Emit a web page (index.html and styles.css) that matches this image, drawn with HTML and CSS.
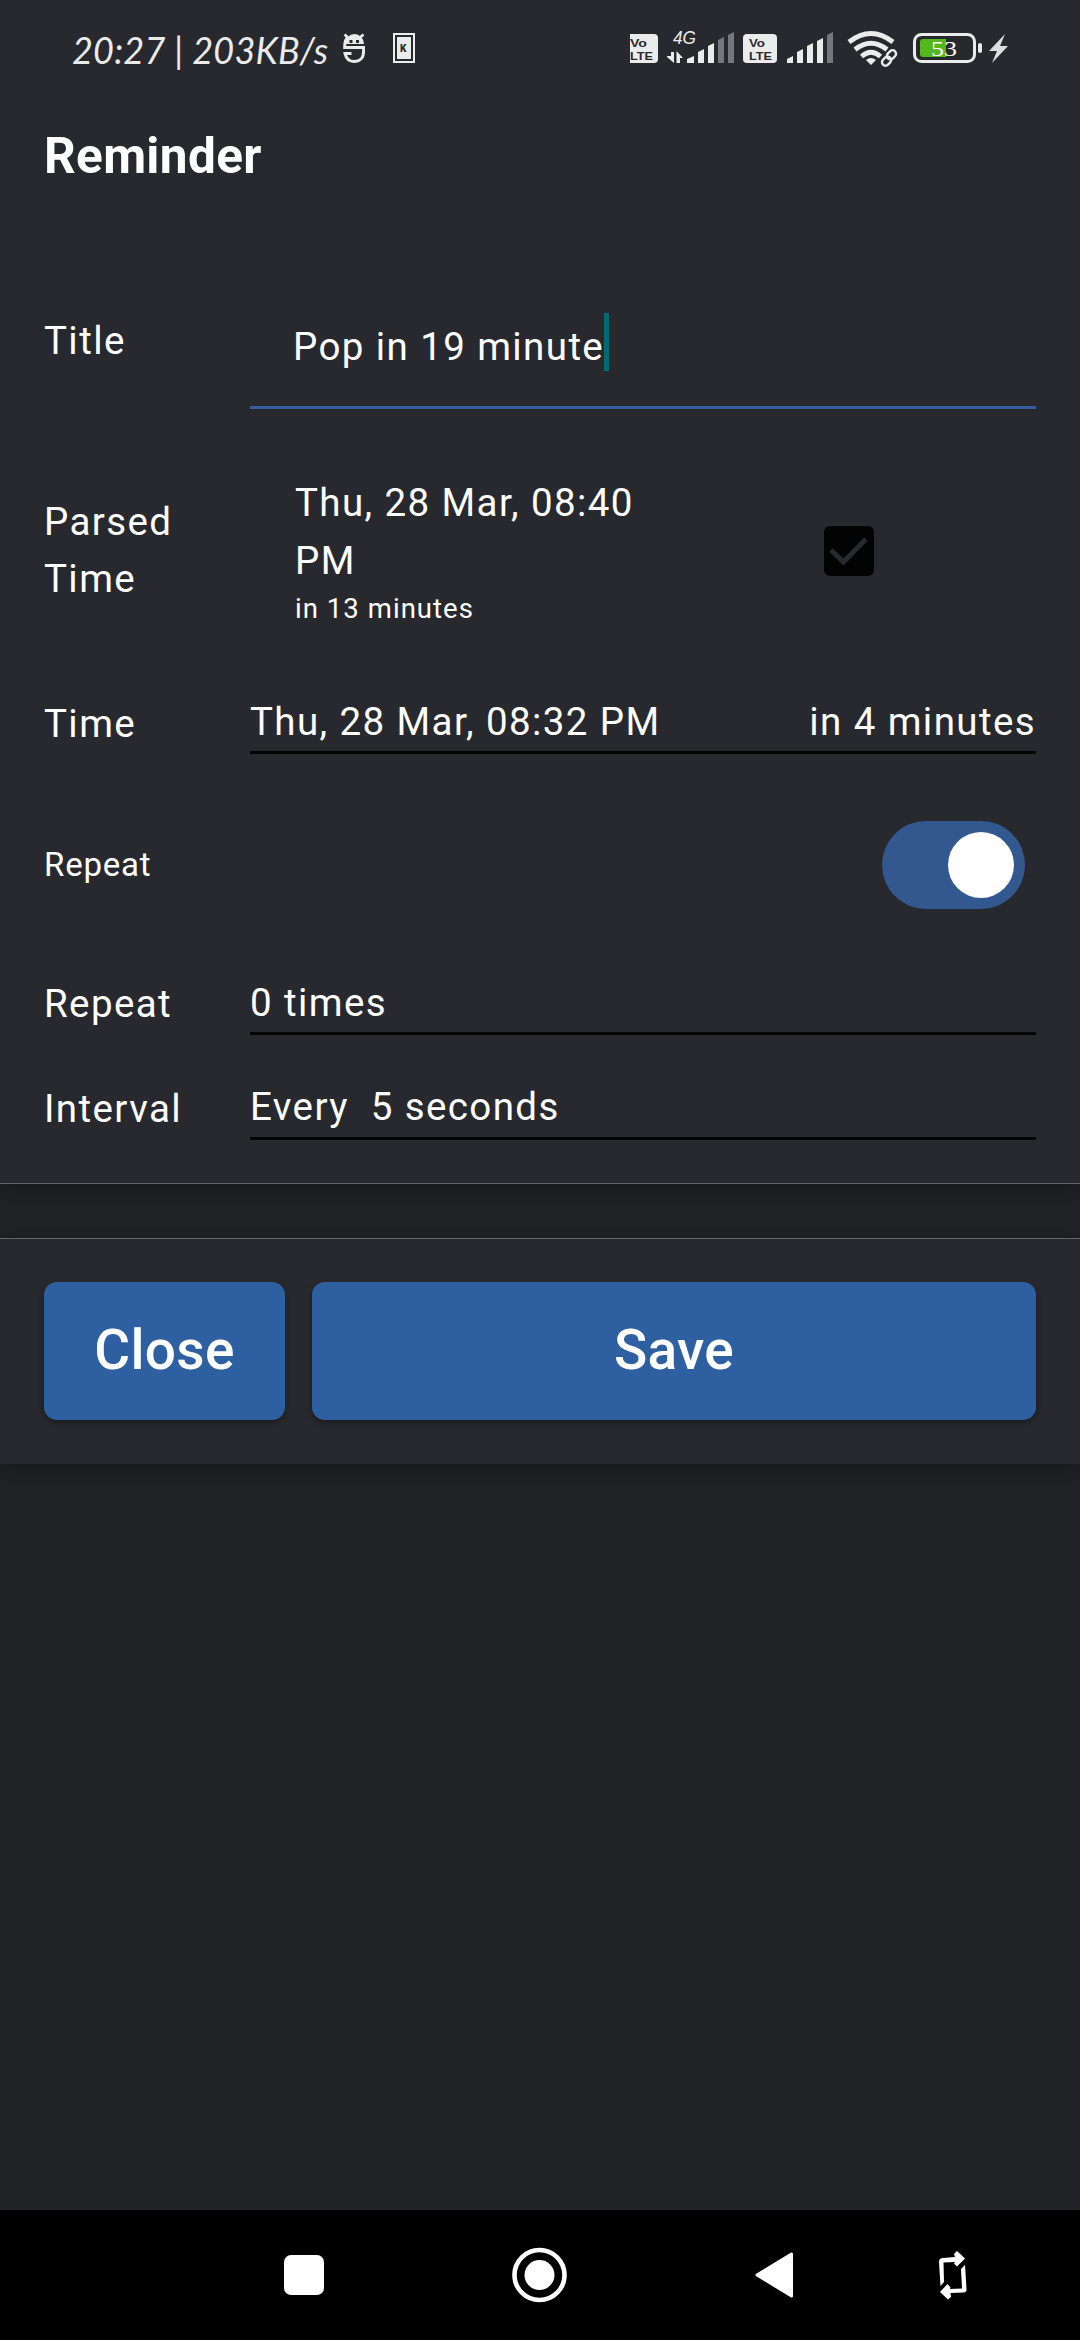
FILE: index.html
```
<!DOCTYPE html>
<html lang="en">
<head>
<meta charset="utf-8">
<title>Reminder</title>
<link rel="stylesheet" href="styles.css">
</head>
<body>
<header class="status">
  <span class="clock">20:27 | 203KB/s</span>
  <svg class="ic-shield" width="24" height="32" viewBox="0 0 24 32" fill="none" stroke="#ebebeb" stroke-width="3"><path d="M2 11A9.500 10 0 0 1 21 11Z" fill="#ebebeb" stroke="none"/><path d="M1.500 1.500 5 4.500M20.500 1.500 17 4.500" stroke-width="2.600"/><path d="M5 4Q1.500 7 1.700 14.500H20.500V19C20.500 25 16.500 28.500 11.200 28.500S3 25 2 20.500H8.500"/><path d="M6.500 8.500H9.500M13 8.500H16" stroke="#28292e"/></svg>
  <svg class="ic-card" width="22" height="30" viewBox="0 0 22 30"><path d="M1 1H21V29H1Z" fill="none" stroke="#ebebeb" stroke-width="2"/><path d="M4 4H18V26H4Z" fill="#ebebeb"/><text x="7" y="18.500" class="tiny-k">K</text></svg>
  <svg class="indicators" width="380" height="42" viewBox="0 -5 380 42" fill="#ebebeb">
    <path d="M0 2H24Q28 2 28 6V27Q28 31 24 31H0Z"/>
    <g class="volte"><text x="0" y="14.500" textLength="17" lengthAdjust="spacingAndGlyphs">Vo</text><text x="0" y="27.500" textLength="23" lengthAdjust="spacingAndGlyphs">LTE</text></g>
    <text class="net" x="43" y="12" textLength="23" lengthAdjust="spacingAndGlyphs">4G</text>
    <path d="M44 20V31L37 25V24H41V20ZM46.500 31V19L53 26H50V31Z"/>
    <path d="M57 31V27L64 24V31ZM68 31V20L74 17V31ZM78 31V14L84 11V31Z"/><path d="M88 31V8L94 5V31ZM98 31V3L104 0V31Z" fill="#77777b"/>
    <rect x="113" y="2" width="34" height="29" rx="4"/>
    <g class="volte"><text x="119" y="14.500" textLength="16" lengthAdjust="spacingAndGlyphs">Vo</text><text x="119" y="27.500" textLength="23" lengthAdjust="spacingAndGlyphs">LTE</text></g>
    <path d="M157 31V27L163 24V31ZM167 31V20L173 17V31ZM177 31V14L183 11V31ZM187 31V9L193 6V31Z"/><path d="M197 31V3L203 0V31Z" fill="#77777b"/>
    <g fill="none" stroke="#ebebeb" stroke-width="4.800"><path d="M219 10Q241-7 263 10M225 17.500Q241 5 257 17.500M231.500 24.500Q241 16 250.500 24.500"/></g>
    <path d="M236 28Q241 24 246 28L241 33Z"/>
    <g transform="rotate(-45 259 26)" fill="none"><path d="M249 22.500H269V29.500H249Z" stroke="#28292e" stroke-width="5"/><g stroke="#ebebeb" stroke-width="2.400"><rect x="250" y="23" width="10" height="7" rx="3.500"/><rect x="258" y="22" width="10" height="7" rx="3.500"/></g></g>
    <rect x="284.500" y="2.500" width="60" height="27" rx="7" fill="none" stroke="#ebebeb" stroke-width="3"/>
    <path d="M293 7H316V25H293Q290 25 290 22V10Q290 7 293 7Z" fill="#55b71b"/><rect x="348" y="11" width="4" height="10" rx="2"/>
    <text class="pct" x="301" y="24" textLength="26" lengthAdjust="spacingAndGlyphs">53</text>
    <path d="M375 2 359 19H367L362 31 378 14H370Z" fill="#dedede"/>
  </svg>
</header>
<main>
  <section class="card form">
    <h1>Reminder</h1>
    <div class="row title"><label>Title</label><div class="field"><span>Pop in 19 minute</span><i class="caret"></i></div></div>
    <div class="row parsed"><label>Parsed<br>Time</label><div class="when">Thu, 28 Mar, 08:40<br>PM<small>in 13 minutes</small></div>
      <svg class="check" width="50" height="50" viewBox="0 0 50 50"><rect width="50" height="50" rx="6" fill="#030303"/><path d="M7 24 19.500 36 42 13" fill="none" stroke="#28292e" stroke-width="5"/></svg></div>
    <div class="row time"><label>Time</label><div class="field"><span>Thu, 28 Mar, 08:32 PM</span><span>in 4 minutes</span></div></div>
    <div class="row switch-row"><span>Repeat</span><div class="switch"><i></i></div></div>
    <div class="row times"><label>Repeat</label><div class="field"><span>0 times</span></div></div>
    <div class="row every"><label>Interval</label><div class="field"><span>Every&nbsp; 5 seconds</span></div></div>
  </section>
  <section class="card actions"><button class="close">Close</button><button class="save">Save</button></section>
</main>
<nav>
  <svg width="1080" height="130" viewBox="0 0 1080 130" fill="#fff">
    <rect x="284" y="45" width="40" height="40" rx="7"/>
    <circle cx="539.500" cy="65" r="25" fill="none" stroke="#fff" stroke-width="4.600"/><circle cx="539.500" cy="65" r="15"/>
    <path d="M757 65 791.500 44V86Z" stroke="#fff" stroke-width="3" stroke-linejoin="round"/>
    <path d="M940.500 76 939 52Q939 48 943 48L955 47 954 44 957 41 965 48.500 957 56.500 954 53.500 955 52 943.500 52.500 944 72ZM961 59 965 55 966.500 79Q967 82.500 963 82.500L950.500 83 951 87 948 89.500 940 82 947.500 74 950.500 77.500 950 79 962 78.500Z"/>
  </svg>
</nav>
</body>
</html>
```
FILE: styles.css
```
* { box-sizing: border-box; }
body { margin: 0; width: 1080px; height: 2340px; display: flex; flex-direction: column; background: #212226; color: #fff; font-family: Roboto, sans-serif; font-size: 38.5px; line-height: 58px; letter-spacing: 1.4px; overflow: hidden; }
.status { position: relative; z-index: 1; height: 100px; background: #28292e; display: flex; align-items: flex-start; padding: 33px 0 0 72px; color: #ebebeb; }
.clock { font: italic 36px/34px Lato, sans-serif; letter-spacing: .2px; width: 271px; white-space: pre; }
.ic-card { margin-left: 26px; }
.indicators { margin: -6px 0 0 215px; }
.tiny-k { font: 900 10px Roboto, sans-serif; fill: #28292e; letter-spacing: 0; }
.volte { font: 700 11px "Liberation Sans", sans-serif; fill: #28292e; letter-spacing: 0; }
.net { font: italic 19px "Liberation Sans", sans-serif; letter-spacing: 0; }
.pct { font: 22px "Liberation Serif", serif; fill: #fff; letter-spacing: 0; }
main { flex: 1; }
.card { background: #28292e; box-shadow: 0 6px 20px rgba(0, 0, 0, .32); }
.form { height: 1084px; padding: 0 44px; border-bottom: 1px solid #626367; }
h1 { margin: 0; height: 204px; padding-top: 27px; font-size: 49.5px; line-height: 58px; letter-spacing: .35px; font-weight: 700; }
.row { display: grid; grid-template-columns: 206px 1fr; }
.field { display: flex; justify-content: space-between; border-bottom: 3px solid #040404; white-space: pre; }
.title { height: 105px; }
.title label { padding-top: 8px; }
.title .field { justify-content: flex-start; padding: 14px 0 0 43px; border-color: #365da0; }
.caret { width: 5px; height: 58px; margin: -5px 0 0 0; background: #006a74; }
.parsed { grid-template-columns: 251px 529px auto; padding-top: 65px; height: 275px; }
.parsed label { padding-top: 19px; line-height: 57px; }
.when small { display: block; font-size: 27.5px; line-height: 38px; letter-spacing: 1.05px; }
.check { margin-top: 52px; }
.time { height: 70px; }
.time, .times, .every { align-items: end; }
.time label { padding-bottom: 1px; }
.times label, .every label { padding-bottom: 2px; }
.time .field, .times .field { height: 61px; }
.every .field { height: 62px; }
.switch-row { display: flex; justify-content: space-between; align-items: center; height: 88px; margin-top: 67px; padding-right: 11px; font-size: 33px; letter-spacing: .8px; }
.switch { width: 143px; height: 88px; padding: 11px; border-radius: 44px; background: #32588f; display: flex; justify-content: flex-end; }
.switch i { width: 66px; height: 66px; border-radius: 50%; background: #fff; }
.times { margin-top: 58px; height: 68px; }
.every { margin-top: 37px; height: 68px; }
.actions { margin-top: 54px; height: 226px; padding: 43px 44px 44px; border-top: 1px solid #626367; display: flex; gap: 27px; }
button { height: 138px; padding: 0 0 3px; border: 0; border-radius: 13px; background: #2d5fa1; color: #fff; font: 500 55px Roboto, sans-serif; letter-spacing: .3px; box-shadow: 0 3px 6px rgba(0, 0, 0, .35); }
.close { width: 241px; }
.save { flex: 1; }
nav { height: 130px; background: #000; }
nav svg { display: block; }
```
